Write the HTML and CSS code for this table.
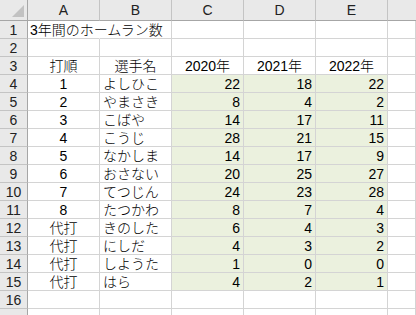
FILE: index.html
```html
<!DOCTYPE html>
<html lang="ja">
<head>
<meta charset="utf-8">
<title>3年間のホームラン数</title>
<link rel="stylesheet" href="styles.css">
</head>
<body>
<div class="sheet">
  <div class="c corner"><span class="tri"></span></div>
  <div class="c ch">A</div><div class="c ch">B</div><div class="c ch">C</div><div class="c ch">D</div><div class="c ch">E</div><div class="c ch last"></div>

  <div class="c rh">1</div><div class="c title">3年間のホームラン数</div><div class="c"></div><div class="c"></div><div class="c"></div><div class="c"></div><div class="c"></div>
  <div class="c rh">2</div><div class="c"></div><div class="c"></div><div class="c"></div><div class="c"></div><div class="c"></div><div class="c"></div>
  <div class="c rh">3</div><div class="c ctr">打順</div><div class="c ctr">選手名</div><div class="c ctr">2020年</div><div class="c ctr">2021年</div><div class="c ctr">2022年</div><div class="c"></div>

  <div class="c rh">4</div><div class="c ctr">1</div><div class="c">よしひこ</div><div class="c n">22</div><div class="c n">18</div><div class="c n">22</div><div class="c"></div>
  <div class="c rh">5</div><div class="c ctr">2</div><div class="c">やまさき</div><div class="c n">8</div><div class="c n">4</div><div class="c n">2</div><div class="c"></div>
  <div class="c rh">6</div><div class="c ctr">3</div><div class="c">こばや</div><div class="c n">14</div><div class="c n">17</div><div class="c n">11</div><div class="c"></div>
  <div class="c rh">7</div><div class="c ctr">4</div><div class="c">こうじ</div><div class="c n">28</div><div class="c n">21</div><div class="c n">15</div><div class="c"></div>
  <div class="c rh">8</div><div class="c ctr">5</div><div class="c">なかしま</div><div class="c n">14</div><div class="c n">17</div><div class="c n">9</div><div class="c"></div>
  <div class="c rh">9</div><div class="c ctr">6</div><div class="c">おさない</div><div class="c n">20</div><div class="c n">25</div><div class="c n">27</div><div class="c"></div>
  <div class="c rh">10</div><div class="c ctr">7</div><div class="c">てつじん</div><div class="c n">24</div><div class="c n">23</div><div class="c n">28</div><div class="c"></div>
  <div class="c rh">11</div><div class="c ctr">8</div><div class="c">たつかわ</div><div class="c n">8</div><div class="c n">7</div><div class="c n">4</div><div class="c"></div>
  <div class="c rh">12</div><div class="c ctr">代打</div><div class="c">きのした</div><div class="c n">6</div><div class="c n">4</div><div class="c n">3</div><div class="c"></div>
  <div class="c rh">13</div><div class="c ctr">代打</div><div class="c">にしだ</div><div class="c n">4</div><div class="c n">3</div><div class="c n">2</div><div class="c"></div>
  <div class="c rh">14</div><div class="c ctr">代打</div><div class="c">しようた</div><div class="c n">1</div><div class="c n">0</div><div class="c n">0</div><div class="c"></div>
  <div class="c rh">15</div><div class="c ctr">代打</div><div class="c">はら</div><div class="c n">4</div><div class="c n">2</div><div class="c n">1</div><div class="c"></div>
  <div class="c rh">16</div><div class="c"></div><div class="c"></div><div class="c"></div><div class="c"></div><div class="c"></div><div class="c"></div>
  <div class="c rh"></div><div class="c"></div><div class="c"></div><div class="c"></div><div class="c"></div><div class="c"></div><div class="c"></div>
</div>
</body>
</html>
```
FILE: styles.css
```css
html, body {
  margin: 0;
  padding: 0;
  background: #ffffff;
  overflow: hidden;
}
body {
  font-family: "Liberation Sans", "Noto Sans CJK JP", sans-serif;
  font-size: 14px;
  font-weight: 300;
  color: #000000;
}
.sheet {
  display: grid;
  grid-template-columns: 28px repeat(5, 72px) 1fr;
  grid-template-rows: 21px;
  grid-auto-rows: 18px;
  width: 416px;
}
.c {
  box-sizing: border-box;
  border-right: 1px solid #d4d4d4;
  border-bottom: 1px solid #d4d4d4;
  line-height: 18px;
  padding: 0 3px;
  white-space: nowrap;
  overflow: visible;
}
.ch {
  background: #e9e9e9;
  border-right-color: #c4c4c4;
  border-bottom-color: #a6a6a6;
  text-align: center;
  line-height: 21px;
  color: #222;
}
.ch.last {
  border-right: none;
}
.corner {
  position: relative;
  background: #e9e9e9;
  border-right-color: #a6a6a6;
  border-bottom-color: #a6a6a6;
}
.tri {
  position: absolute;
  right: 3px;
  bottom: 3px;
  width: 0;
  height: 0;
  border-left: 12px solid transparent;
  border-bottom: 12px solid #c2c2c2;
}
.rh {
  background: #e9e9e9;
  border-right-color: #a6a6a6;
  border-bottom-color: #c4c4c4;
  text-align: center;
  padding: 0;
  color: #222;
}
.title {
  border-right-color: transparent;
  padding-left: 2px;
}
.ctr {
  text-align: center;
}
.n {
  background: #ebf1de;
  text-align: right;
}
```
